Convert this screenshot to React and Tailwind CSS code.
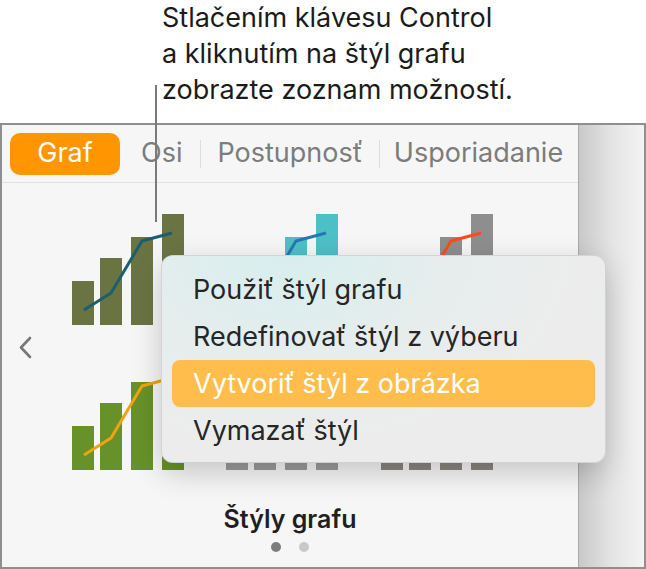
import React from "react";

function Chart({ bar, line, width = 112 }) {
  const bars = [
    { x: 0, h: 44 },
    { x: 28, h: 67 },
    { x: 59, h: 88 },
    { x: 90, h: 111 },
  ];
  return (
    <svg width={width} height="111" viewBox="0 0 112 111" className="block">
      {bars.map((b, i) => (
        <rect key={i} x={b.x} y={111 - b.h} width="22" height={b.h} fill={bar} />
      ))}
      <polyline
        points="12,96 39,79 70,27 100,19"
        fill="none"
        stroke={line}
        strokeWidth="3"
        strokeLinejoin="round"
      />
    </svg>
  );
}

export default function App() {
  const charts = [
    { bar: "#6a7443", line: "#1d5e6e" },
    { bar: "#4dc0c7", line: "#2677b2" },
    { bar: "#8e8e8e", line: "#ff4a1a" },
    { bar: "#67922a", line: "#f2a20c" },
    { bar: "#9b9b9b", line: "#6a6a6a" },
    { bar: "#8a8580", line: "#6a6a6a" },
  ];
  return (
    <div className="relative w-[646px] h-[569px] overflow-hidden bg-white font-['Inter',sans-serif]">
      <div className="pl-[162px] text-[27px] leading-[36px] text-[#1b1b1b]">
        <div>Stlačením klávesu Control</div>
        <div>a kliknutím na štýl grafu</div>
        <div>zobrazte zoznam možností.</div>
      </div>

      <div className="mt-[15px] flex h-[446px] border-2 border-[#8f8f8f]">
        <div className="flex w-[577px] flex-col border-r border-[#a9a9a9] bg-[#f6f6f6]">
          <div className="flex h-[58px] items-center border-b border-[#e2e2e2] pl-[8px] text-[27px] text-[#7c7c7c]">
            <div className="flex h-[42px] w-[110px] items-center justify-center rounded-[10px] bg-[#ff9500] text-white">
              Graf
            </div>
            <div className="ml-[21px]">Osi</div>
            <div className="ml-[18px] h-[28px] w-[1px] bg-[#dddddd]" />
            <div className="ml-[16px]">Postupnosť</div>
            <div className="ml-[16px] h-[28px] w-[1px] bg-[#dddddd]" />
            <div className="ml-[14px]">Usporiadanie</div>
          </div>

          <div className="flex pt-[31px]">
            <div className="flex w-[70px] items-center pl-[16px] pt-[10px]">
              <svg width="15" height="23" viewBox="0 0 15 23">
                <polyline
                  points="12,2 3,11.5 12,21"
                  fill="none"
                  stroke="#777777"
                  strokeWidth="2.6"
                  strokeLinecap="round"
                  strokeLinejoin="round"
                />
              </svg>
            </div>
            <div className="grid grid-cols-[154px_155px_112px] gap-y-[34px]">
              {charts.map((c, i) => (
                <Chart key={i} bar={c.bar} line={c.line} />
              ))}
            </div>
          </div>

          <div className="mt-[34px] text-center text-[25px] leading-[30px] font-semibold text-[#1f1f1f]">
            Štýly grafu
          </div>
          <div className="mt-[8px] flex justify-center gap-[18px]">
            <div className="h-[10px] w-[10px] rounded-full bg-[#7c7c7c]" />
            <div className="h-[10px] w-[10px] rounded-full bg-[#c9c9c9]" />
          </div>
        </div>
        <div className="flex-1 bg-gradient-to-r from-[#c9c9c9] via-[#e4e4e4] to-[#f3f3f3]" />
      </div>

      <div className="absolute left-[155px] top-[85px] h-[137px] w-[2px] bg-[#7a7a7a]" />

      <div className="absolute left-[161px] top-[255px] w-[445px] h-[208px] rounded-[12px] border border-black/10 bg-[radial-gradient(ellipse_at_28%_0%,#d7eeee_0%,#e6eded_35%,#ececec_65%)] shadow-[0_10px_30px_rgba(0,0,0,0.2)] px-[10px] pt-[10px] text-[27px] text-[#262626]">
        <div className="h-[47px] leading-[47px] pl-[21px]">Použiť štýl grafu</div>
        <div className="h-[47px] leading-[47px] pl-[21px]">Redefinovať štýl z výberu</div>
        <div className="h-[47px] leading-[47px] pl-[21px] rounded-[8px] bg-[#ffbd4c] text-white">
          Vytvoriť štýl z obrázka
        </div>
        <div className="h-[47px] leading-[47px] pl-[21px]">Vymazať štýl</div>
      </div>
    </div>
  );
}
